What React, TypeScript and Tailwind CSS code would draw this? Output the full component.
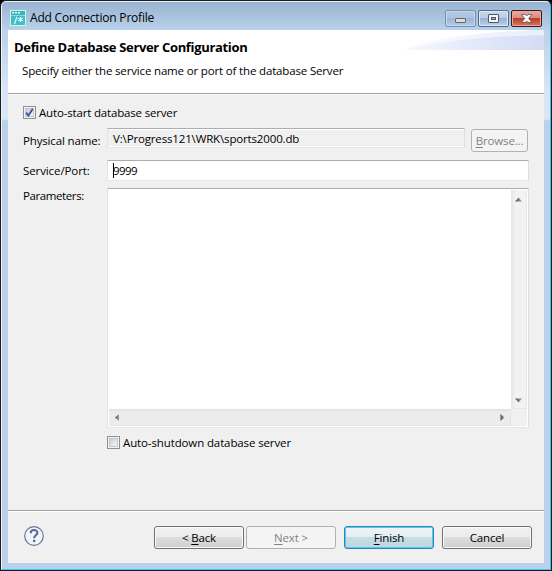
import { useState, type ReactNode } from "react";

type PushButtonProps = {
  children: ReactNode;
  className?: string;
  disabled?: boolean;
  primary?: boolean;
};

/**
 * PushButton
 * Standard dialog button with default and disabled variants.
 */
function PushButton({
  children,
  className = "",
  disabled = false,
  primary = false,
}: PushButtonProps) {
  const look = disabled
    ? "border-[#adb2b5] bg-[#f4f4f4] text-[#838383]"
    : primary
    ? "border-[#3c7fb1] bg-[linear-gradient(#eef4f7_0%,#e3eef3_48%,#c8dde5_50%,#bfd6df_100%)] text-black shadow-[inset_0_0_0_1px_#48d0f5]"
    : "border-[#707070] bg-[linear-gradient(#f2f2f2_0%,#ebebeb_48%,#dddddd_50%,#cfcfcf_100%)] text-black shadow-[inset_0_0_0_1px_#fafafa]";

  return (
    <button
      disabled={disabled}
      className={`flex h-[23px] items-center justify-center rounded-[3px] border whitespace-pre ${look} ${className}`}
    >
      {children}
    </button>
  );
}

function CheckBox({
  label,
  className = "",
  defaultChecked = false,
}: {
  label: string;
  className?: string;
  defaultChecked?: boolean;
}) {
  const [checked, setChecked] = useState(defaultChecked);

  return (
    <button
      role="checkbox"
      aria-checked={checked}
      onClick={() => setChecked(!checked)}
      className="flex h-[13px] items-center gap-[3px]"
    >
      <span className="size-[13px] shrink-0 border border-[#8e8f8f] bg-[#f4f4f4] p-px">
        <span className="block size-[9px] border border-[#c3c7cd] bg-linear-to-br from-[#c9ced6] to-[#f6f6f6]">
          {checked && (
            <svg viewBox="0 0 9 9" className="-m-px size-[9px]">
              <path
                d="M1.2 4.6 3.4 7.6 7.8 0.8"
                fill="none"
                stroke="#42579c"
                strokeWidth="1.9"
              />
            </svg>
          )}
        </span>
      </span>
      <span className={`whitespace-nowrap ${className}`}>{label}</span>
    </button>
  );
}

function AppIcon() {
  return (
    <svg viewBox="0 0 16 16" className="size-4">
      <rect width="16" height="16" fill="#d9f3f5" />
      <rect x="1" y="1" width="14" height="4" fill="#35b5bd" />
      <rect x="1" y="5.500" width="14" height="9.500" fill="#3fbfca" />
      <path
        d="M2 2h2v1.5H2zM5 2h2v1.5H5zM8 2h2v1.5H8z"
        fill="#f4ffff"
      />
      <path
        d="M6.8 7 4.6 14M10.5 7v5M8.3 8.2l4.4 2.6M12.7 8.2l-4.4 2.6"
        stroke="#f4ffff"
        strokeWidth="1.1"
      />
    </svg>
  );
}

/**
 * CaptionButtons
 * Minimize, maximize and close controls of the window frame.
 */
function CaptionButtons() {
  return (
    <div className="flex gap-[2px] pt-[8px] pr-[2px]">
      <button
        aria-label="Minimize"
        className="h-[17px] w-[31px] rounded-[2px] border border-[#778fae] bg-[linear-gradient(#b4cae3_0%,#abc4df_48%,#9bb7d6_50%,#b3cce7_100%)] shadow-[inset_0_0_0_1px_#c5d8ec]"
      >
        <svg viewBox="0 0 29 15" className="h-[15px] w-[29px]">
          <rect x="9.5" y="7.5" width="10" height="4" rx="0.5" fill="#dcdcdc" stroke="#676767" />
        </svg>
      </button>
      <button
        aria-label="Maximize"
        className="h-[17px] w-[31px] rounded-[2px] border border-[#526a8c] bg-[linear-gradient(#c5d7eb_0%,#b7cee7_48%,#94b3d5_50%,#bbd4ef_100%)] shadow-[inset_0_0_0_1px_#dce9f6]"
      >
        <svg viewBox="0 0 29 15" className="h-[15px] w-[29px]">
          <rect x="9.5" y="3.5" width="10" height="8" rx="0.5" fill="#f7f7f7" stroke="#535666" />
          <rect x="12.5" y="6.5" width="4" height="2" fill="#91afd2" stroke="#535666" />
        </svg>
      </button>
      <button
        aria-label="Close"
        className="h-[17px] w-[31px] rounded-[2px] border border-[#431422] bg-[linear-gradient(#e9aca0_0%,#d98a7c_48%,#bc3e28_50%,#d7755f_100%)] shadow-[inset_0_0_0_1px_#eba999]"
      >
        <svg viewBox="0 0 29 15" className="h-[15px] w-[29px]">
          <path
            d="M9.5 3.5h4l1.2 1.500 1.2-1.500h4l-3.200 4 3.200 4h-4l-1.200-1.500-1.200 1.500h-4l3.200-4z"
            fill="#fbfbfb"
            stroke="#535666"
            strokeWidth="0.8"
          />
        </svg>
      </button>
    </div>
  );
}

function Arrow({ d }: { d: string }) {
  return (
    <svg viewBox="0 0 7 7" className="size-[7px]">
      <path d={d} fill="url(#arrowShade)" />
      <defs>
        <linearGradient id="arrowShade">
          <stop offset="0" stopColor="#505050" />
          <stop offset="1" stopColor="#a0a0a0" />
        </linearGradient>
      </defs>
    </svg>
  );
}

const fieldBorder =
  "border border-t-[#abadb3] border-r-[#dbdfe6] border-b-[#e3e9ef] border-l-[#e2e3ea]";

export default function App() {
  return (
    <div className="h-[571px] w-[552px] overflow-hidden bg-black font-['Open_Sans','Noto_Sans',sans-serif] text-[11.5px] leading-[16px] tracking-[-0.15px] text-black">
      <div className="h-[571px] rounded-t-[6px] border border-[#1c1c20]">
        <div className="flex h-[569px] flex-col rounded-t-[5px] border border-t-[#e9f1fa] border-r-[#35c7ee] border-b-[#35c7ee] border-l-[#f1f6fc] bg-[linear-gradient(#99b4d1_0px,#b9d1ea_28px,#d8e5f5_90px,#dbe7f6_117px,#b9d1ea_119px)] px-[6px] pb-[6px]">
          <div className="flex h-[28px] shrink-0 justify-between">
            <div className="flex items-start gap-1 pt-[8px] pl-[2px]">
              <AppIcon />
              <span className="text-[12px] whitespace-nowrap tracking-[-0.2px]">
                Add Connection Profile
              </span>
            </div>
            <CaptionButtons />
          </div>

          <div className="flex h-[533px] flex-col bg-[#f0f0f0]">
            <div className="flex h-[64px] shrink-0 justify-between border-b border-[#a0a0a0] bg-white">
              <div className="pt-[9px] pl-[6px]">
                <h1 className="text-[13px] leading-[17px] font-bold whitespace-nowrap tracking-[-0.33px]">
                  Define Database Server Configuration
                </h1>
                <p className="pt-[7px] pl-[8px] whitespace-nowrap tracking-[-0.16px]">
                  Specify either the service name or port of the database Server
                </p>
              </div>
              <svg viewBox="0 0 140 20" className="h-[20px] w-[140px]">
                <defs>
                  <linearGradient id="swoosh">
                    <stop offset="0" stopColor="#f6f8fd" />
                    <stop offset="1" stopColor="#d3dbf5" />
                  </linearGradient>
                </defs>
                <path d="M0 20C30 8 75 2 140 0V20Z" fill="url(#swoosh)" />
                <path d="M0 20C30 8 75 2 140 0V5.500C80 6 40 11 0 20Z" fill="#fff" opacity=".5" />
              </svg>
            </div>

            <div className="flex h-[416px] shrink-0 flex-col border-t border-white pt-[11px] pl-[15px]">
              <CheckBox
                label="Auto-start database server"
                className="tracking-[-0.17px]"
                defaultChecked
              />

              <div className="flex pt-[9px]">
                <div className="w-[84px] pt-[5px] whitespace-nowrap">
                  Physical name:
                </div>
                <div className={`h-[20px] w-[358px] pt-[2px] pl-[5px] whitespace-nowrap shadow-[inset_0_-1px_0_#fff,inset_0_1px_0_#fff] ${fieldBorder}`}>
                  V:\Progress121\WRK\sports2000.db
                </div>
                <PushButton disabled className="mt-px ml-[6px] w-[57px]">
                  <u className="underline-offset-2">B</u>rowse...
                </PushButton>
              </div>

              <div className="flex pt-[8px]">
                <div className="w-[84px] pt-[3px] whitespace-nowrap tracking-[-0.1px]">
                  Service/Port:
                </div>
                <div className={`relative h-[21px] w-[422px] bg-white pt-[2px] pl-[5px] tracking-[-0.6px] ${fieldBorder}`}>
                  9999
                  <span className="absolute top-[2px] left-[5px] h-[15px] w-px bg-black" />
                </div>
              </div>

              <div className="flex pt-[7px]">
                <div className="w-[84px] whitespace-nowrap tracking-[-0.4px]">
                  Parameters:
                </div>
                <div className={`flex h-[240px] w-[422px] flex-col bg-[#f0f0f0] shadow-[inset_0_0_0_1px_#fff] p-px ${fieldBorder}`}>
                  <div className="flex h-[219px]">
                    <div className="w-[402px] bg-white" />
                    <div className="flex w-[16px] flex-col items-center justify-between border-r border-b border-[#e8e8e8] bg-linear-to-r from-[#e5e5e5] to-[#f2f2f2] to-30% pt-[6px] pb-[4px]">
                      <Arrow d="M3.500 1.500 7 5.500H0Z" />
                      <Arrow d="M0 1.500H7L3.500 5.500Z" />
                    </div>
                  </div>
                  <div className="flex h-[17px] w-[402px] items-center justify-between border-r border-b border-[#e4e4e4] bg-linear-to-b from-[#dfdfdf] to-[#ececec] to-20% pr-[4px] pl-[5px]">
                    <Arrow d="M5 0V7L1 3.500Z" />
                    <Arrow d="M1.500 0V7L5.500 3.500Z" />
                  </div>
                </div>
              </div>

              <div className="pt-[8px] pl-[84px]">
                <CheckBox
                  label="Auto-shutdown database server"
                  className="tracking-[-0.12px]"
                />
              </div>
            </div>

            <div className="flex h-[53px] items-start border-t border-[#a0a0a0] shadow-[inset_0_1px_0_#fff] pt-[15px] pl-[15px]">
              <button aria-label="Help" className="-mt-px mr-[109px] size-[22px]">
                <svg viewBox="0 0 22 22" className="size-[22px]">
                  <circle cx="11" cy="11" r="9.300" fill="#f3f4f7" stroke="#62779b" strokeWidth="1.200" />
                  <path
                    d="M7.700 8.200C7.700 3.900 14.400 4.200 14.400 7.800C14.400 10.200 11.100 10.400 11.100 13.200"
                    fill="none"
                    stroke="#526b96"
                    strokeWidth="2.100"
                  />
                  <rect x="10" y="14.800" width="2.300" height="2.300" fill="#526b96" />
                </svg>
              </button>
              <PushButton className="w-[90px]">
                {"< "}
                <u className="underline-offset-2">B</u>ack
              </PushButton>
              <PushButton disabled className="ml-[2px] w-[90px]">
                <u className="underline-offset-2">N</u>
                {"ext >"}
              </PushButton>
              <PushButton primary className="ml-[8px] w-[90px]">
                <u className="underline-offset-2">F</u>inish
              </PushButton>
              <PushButton className="ml-[8px] w-[90px]">Cancel</PushButton>
            </div>
          </div>
        </div>
      </div>
    </div>
  );
}
